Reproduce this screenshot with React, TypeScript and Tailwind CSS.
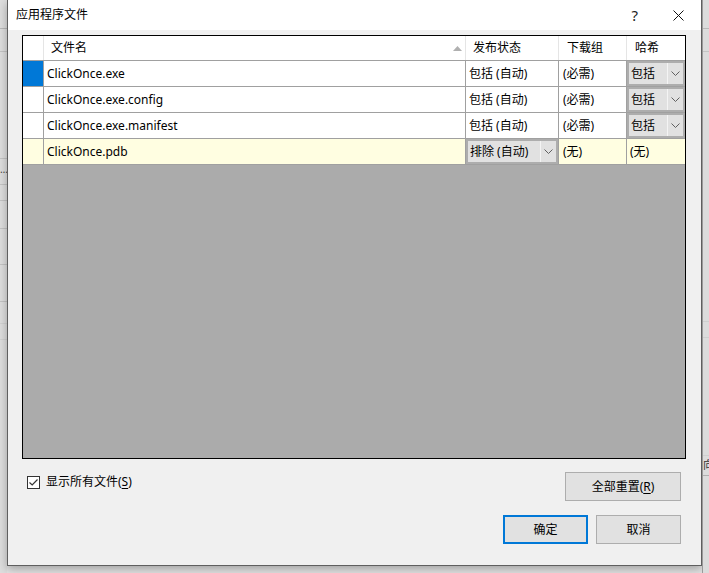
import React from 'react'

const font = "font-['Noto_Sans','Noto_Sans_CJK_SC',sans-serif]"

function Chevron() {
  return (
    <svg width="9" height="5" viewBox="0 0 9 5" className="block">
      <polyline points="0.5,0.5 4.5,4.5 8.5,0.5" fill="none" stroke="#606060" strokeWidth="1" />
    </svg>
  )
}

function Combo({ text, arrowW = 16 }: { text: string; arrowW?: number }) {
  return (
    <div className="flex h-full w-full border-2 border-[#adadad] bg-[#e1e1e1]">
      <div className="flex flex-1 items-center pl-[2px]">{text}</div>
      <div
        className="flex items-center justify-center border-l border-[#f4f4f4]"
        style={{ width: arrowW }}
      >
        <Chevron />
      </div>
    </div>
  )
}

const rows = [
  { name: 'ClickOnce.exe', status: '包括 (自动)', group: '(必需)', hash: '包括', selected: true },
  { name: 'ClickOnce.exe.config', status: '包括 (自动)', group: '(必需)', hash: '包括' },
  { name: 'ClickOnce.exe.manifest', status: '包括 (自动)', group: '(必需)', hash: '包括' },
  { name: 'ClickOnce.pdb', status: '排除 (自动)', group: '(无)', hash: '(无)', excluded: true },
]

const cols = 'grid grid-cols-[21px_422px_93px_68px_1fr]'

export default function App() {
  return (
    <div className={`flex h-[573px] w-[709px] overflow-hidden bg-[#e4e4e4] text-[12px] text-black ${font}`}>
      {/* left strip of the window behind */}
      <div className="flex w-[7px] flex-col bg-[#dedede]">
        <div className="h-[29px] border-b border-[#b9b9b9]" />
        <div className="h-[23px] border-b border-[#c4c4c4]" />
        <div className="h-[107px] border-b border-[#c4c4c4]" />
        <div className="h-[26px] border-b border-[#c4c4c4] text-[10px] leading-[20px] text-[#444]">…</div>
        <div className="h-[16px] border-b border-[#c4c4c4]" />
        <div className="h-[28px] border-b border-[#c4c4c4]" />
        <div className="h-[36px] border-b border-[#c4c4c4]" />
        <div className="h-[37px] border-b border-[#c4c4c4]" />
        <div className="h-[22px] border-b border-[#d2d2d2]" />
        <div className="h-[16px] border-b border-[#d2d2d2]" />
      </div>

      {/* dialog window */}
      <div className="flex h-[566px] w-[695px] shrink-0 flex-col border-x border-b border-[#5f5f5f] bg-[#f0f0f0] shadow-[0_3px_9px_rgba(0,0,0,0.3)]">
        {/* title bar */}
        <div className="flex h-[30px] items-center bg-white pl-[8px]">
          <span className="text-[12px]">应用程序文件</span>
          <div className="flex-1" />
          <span className="mr-[35px] text-[15px] text-[#222]">?</span>
          <svg width="11" height="11" viewBox="0 0 11 11" className="mr-[17px]">
            <line x1="0.5" y1="0.5" x2="10.5" y2="10.5" stroke="#111" strokeWidth="1" />
            <line x1="10.5" y1="0.5" x2="0.5" y2="10.5" stroke="#111" strokeWidth="1" />
          </svg>
        </div>

        {/* grid */}
        <div className="ml-[14px] mt-[5px] flex h-[424px] w-[664px] flex-col border border-black bg-[#ababab]">
          {/* header */}
          <div className={`${cols} h-[25px] border-b border-[#a0a0a0] bg-white`}>
            <div className="border-r border-[#e5e5e5]" />
            <div className="flex items-center border-r border-[#e5e5e5] pl-[7px] pr-[3px]">
              <span className="flex-1">文件名</span>
              <svg width="9" height="5" viewBox="0 0 9 5">
                <polygon points="0,5 4.5,0 9,5" fill="#b0b0b0" />
              </svg>
            </div>
            <div className="flex items-center border-r border-[#e5e5e5] pl-[7px]">发布状态</div>
            <div className="flex items-center border-r border-[#e5e5e5] pl-[8px]">下载组</div>
            <div className="flex items-center pl-[8px]">哈希</div>
          </div>

          {rows.map((r) => {
            const bg = r.excluded ? 'bg-[#fffee1]' : 'bg-white'
            return (
              <div key={r.name} className={`${cols} h-[26px] border-b border-[#a0a0a0] ${bg}`}>
                <div className={`border-r border-[#a0a0a0] ${r.selected ? 'bg-[#0078d7]' : ''}`} />
                <div className="flex items-center border-r border-[#a0a0a0] pl-[3px]">{r.name}</div>
                <div className="flex items-center border-r border-[#a0a0a0]">
                  {r.excluded ? <Combo text={r.status} /> : <span className="pl-[3px]">{r.status}</span>}
                </div>
                <div className="flex items-center border-r border-[#a0a0a0] pl-[4px]">{r.group}</div>
                <div className="flex items-center">
                  {r.excluded ? <span className="pl-[3px]">{r.hash}</span> : <Combo text={r.hash} />}
                </div>
              </div>
            )
          })}
        </div>

        {/* options */}
        <div className="mt-[13px] flex items-start justify-between pl-[19px] pr-[20px]">
          <label className="mt-[1px] flex items-center gap-[6px]">
            <span className="flex h-[13px] w-[13px] items-center justify-center border border-[#333] bg-white">
              <svg width="9" height="7" viewBox="0 0 9 7">
                <polyline points="0.5,3.5 3.2,6 8.5,0.5" fill="none" stroke="#333" strokeWidth="1.2" />
              </svg>
            </span>
            <span>
              显示所有文件(<span className="underline underline-offset-2">S</span>)
            </span>
          </label>
          <button className="flex h-[29px] w-[116px] items-center justify-center border border-[#adadad] bg-[#e1e1e1]">
            全部重置(<span className="underline underline-offset-2">R</span>)
          </button>
        </div>

        <div className="mt-[14px] flex justify-end gap-[8px] pr-[20px]">
          <button className="flex h-[29px] w-[85px] items-center justify-center border-2 border-[#0078d7] bg-[#e1e1e1]">
            确定
          </button>
          <button className="flex h-[29px] w-[85px] items-center justify-center border border-[#adadad] bg-[#e1e1e1]">
            取消
          </button>
        </div>
      </div>

      {/* right strip of the window behind */}
      <div className="flex flex-1 flex-col border-l border-[#9a9a9a] bg-[#dcdcdc]">
        <div className="h-[29px] border-b border-[#b9b9b9]" />
        <div className="h-[23px] border-b border-[#c4c4c4]" />
        <div className="h-[270px] border-b border-[#cfcfcf]" />
        <div className="h-[16px] border-b border-[#cfcfcf]" />
        <div className="h-[118px] border-b border-[#cfcfcf]" />
        <div className="h-[20px] overflow-hidden border-b border-[#b0b0b0] text-[11px] leading-[18px] text-[#333]">向</div>
      </div>
    </div>
  )
}
